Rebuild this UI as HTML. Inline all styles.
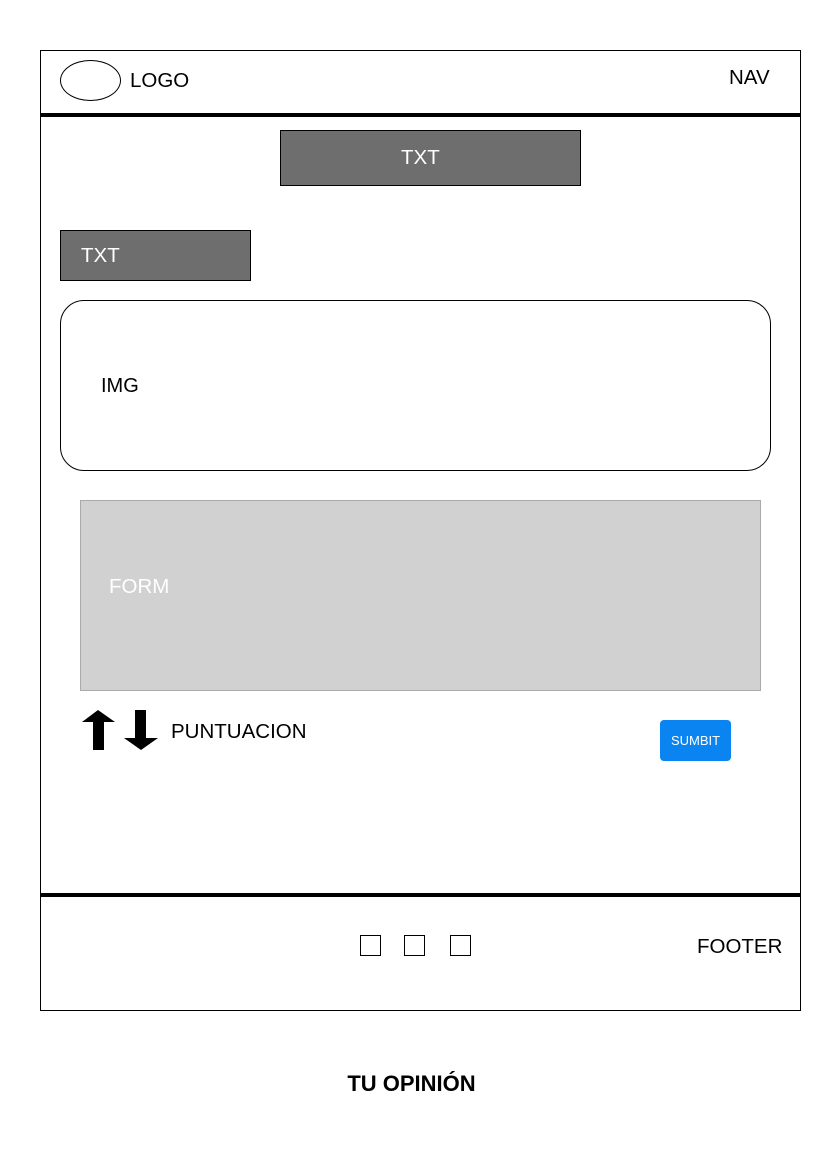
<!DOCTYPE html>
<html><head><meta charset="utf-8"><style>
*{margin:0;padding:0;box-sizing:border-box}
body{width:827px;height:1169px;background:#fff;position:relative;font-family:"Liberation Sans",Arial,sans-serif;overflow:hidden}
.a{position:absolute}
.t{font-size:20.5px;color:#000}
.dk{background:#6e6e6e;border:1px solid #000;color:#fff;font-size:20.5px}
</style></head><body>
<div class="a" style="left:40px;top:50px;width:761px;height:961px;border:1px solid #000"></div>
<div class="a" style="left:40px;top:113px;width:761px;height:4px;background:#000"></div>
<div class="a" style="left:40px;top:893px;width:761px;height:4px;background:#000"></div>
<div class="a" style="left:60px;top:60px;width:61px;height:41px;border:1px solid #000;border-radius:50%"></div>
<div class="a t" style="left:130px;top:69px">LOGO</div>
<div class="a t" style="left:729px;top:66px">NAV</div>
<div class="a dk" style="left:280px;top:130px;width:301px;height:56px;line-height:54px;padding-left:120px">TXT</div>
<div class="a dk" style="left:60px;top:230px;width:191px;height:51px;line-height:49px;padding-left:20px">TXT</div>
<div class="a" style="left:60px;top:300px;width:711px;height:171px;border:1px solid #000;border-radius:24px"></div>
<div class="a t" style="left:101px;top:375px;font-size:20px">IMG</div>
<div class="a" style="left:80px;top:500px;width:681px;height:191px;background:#d1d1d1;border:1px solid #aaa"></div>
<div class="a" style="left:109px;top:575px;color:#fff;font-size:20.5px">FORM</div>
<svg class="a" style="left:80px;top:708px" width="82" height="45">
<polygon points="2,14 18,2 35,14 24,14 24,42 13,42 13,14" fill="#000"/>
<polygon points="55,2 66,2 66,30 78,30 61,42 44,30 55,30" fill="#000"/>
</svg>
<div class="a t" style="left:171px;top:720px">PUNTUACION</div>
<div class="a" style="left:660px;top:720px;width:71px;height:41px;background:#0a84f0;border-radius:4px;color:#fff;font-size:13px;text-align:center;line-height:41px">SUMBIT</div>
<div class="a" style="left:360px;top:935px;width:21px;height:21px;border:1px solid #000"></div>
<div class="a" style="left:404px;top:935px;width:21px;height:21px;border:1px solid #000"></div>
<div class="a" style="left:450px;top:935px;width:21px;height:21px;border:1px solid #000"></div>
<div class="a t" style="left:697px;top:935px">FOOTER</div>
<div class="a" style="left:0;width:823px;top:1071px;text-align:center;font-weight:bold;font-size:22px">TU OPINIÓN</div>
</body></html>
